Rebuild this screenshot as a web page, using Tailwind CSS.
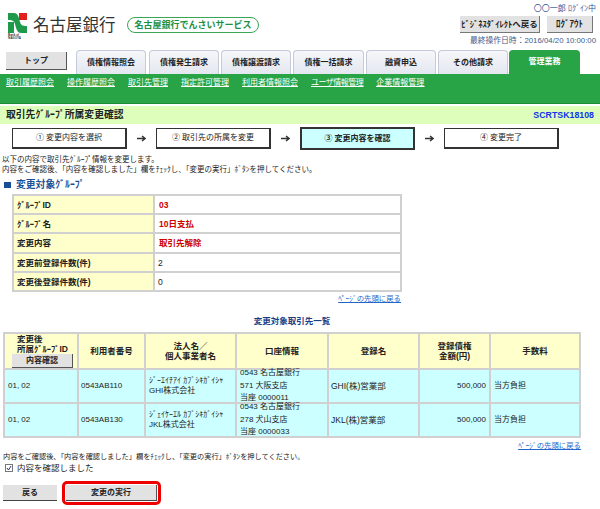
<!DOCTYPE html>
<html lang="ja">
<head>
    <meta charset="UTF-8">
    <title>取引先グループ所属変更確認</title>
    <script src="https://cdn.jsdelivr.net/npm/@tailwindcss/browser@4"></script>
</head>
<body class="bg-white w-[600px] h-[509px] overflow-hidden text-[8px] leading-[10px] text-[#222] font-['Liberation_Sans','Noto_Sans_CJK_JP',sans-serif]">

    <!-- header -->
    <header class="h-[50px] flex justify-between">
        <div class="flex items-start pt-[13px] pl-[8px]">
            <div class="w-[19px]">
                <svg width="19" height="20" viewBox="0 0 19 20">
                    <path d="M0 0H6C10 0 11 5 12 9C13 12 14 13 19 13V20H13C9 20 8 15 7 11C6 8 5 7 0 7Z" fill="#1f9a4a"/>
                    <rect x="0" y="9" width="6" height="11" fill="#1f9a4a"/>
                    <rect x="11" y="0" width="8" height="7" fill="#e0201c"/>
                </svg>
                <div class="text-[3px] leading-[3px] font-bold text-[#333] whitespace-nowrap mt-[1px]">Bank of<br>NAGOYA</div>
            </div>
            <div class="ml-[6px] mt-[2px] w-[83px] text-[16.5px] leading-[20px] text-[#333] whitespace-nowrap">名古屋銀行</div>
            <div class="ml-[11px] mt-[4px] w-[132px] h-[16px] border border-[#3aa655] rounded-full flex items-center justify-center text-[9px] font-bold text-[#1c8f42] whitespace-nowrap">名古屋銀行でんさいサービス</div>
        </div>
        <div class="flex flex-col items-end pt-[3px] pr-[4px]">
            <div class="text-[#33559a] h-[11px] leading-[11px]">〇〇一郎 ﾛｸﾞｲﾝ中</div>
            <div class="flex gap-[7px] mt-[2px] mr-[3px]">
                <button class="w-[80px] h-[17px] bg-[#e2e2e2] border-r border-b border-r-[#777] border-b-[#777] font-bold text-[8.5px] whitespace-nowrap">ﾋﾞｼﾞﾈｽﾀﾞｲﾚｸﾄへ戻る</button>
                <button class="w-[46px] h-[17px] bg-[#e2e2e2] border-r border-b border-r-[#777] border-b-[#777] font-bold text-[9px]">ﾛｸﾞｱｳﾄ</button>
            </div>
            <div class="text-[#445a8a] mt-[2px] h-[11px] leading-[11px] text-[7.8px]">最終操作日時：2016/04/20 10:00:00</div>
        </div>
    </header>

    <!-- tabs -->
    <nav class="h-[24px] flex items-end pl-[6px]">
        <button class="w-[61px] h-[18px] mb-[4px] mr-[9px] bg-[#e2e2e2] border-r border-b border-r-[#555] border-b-[#555] font-bold">トップ</button>
        <div class="w-[70px] h-[24px] mr-[3px] rounded-t-[4px] border border-b-0 border-[#c4cad8] bg-gradient-to-b from-[#f6f7fa] to-[#e4e7f0] flex items-center justify-center font-bold">債権情報照会</div>
        <div class="w-[70px] h-[24px] mr-[2px] rounded-t-[4px] border border-b-0 border-[#c4cad8] bg-gradient-to-b from-[#f6f7fa] to-[#e4e7f0] flex items-center justify-center font-bold">債権発生請求</div>
        <div class="w-[70px] h-[24px] mr-[2px] rounded-t-[4px] border border-b-0 border-[#c4cad8] bg-gradient-to-b from-[#f6f7fa] to-[#e4e7f0] flex items-center justify-center font-bold">債権譲渡請求</div>
        <div class="w-[71px] h-[24px] mr-[2px] rounded-t-[4px] border border-b-0 border-[#c4cad8] bg-gradient-to-b from-[#f6f7fa] to-[#e4e7f0] flex items-center justify-center font-bold">債権一括請求</div>
        <div class="w-[70px] h-[24px] mr-[2px] rounded-t-[4px] border border-b-0 border-[#c4cad8] bg-gradient-to-b from-[#f6f7fa] to-[#e4e7f0] flex items-center justify-center font-bold">融資申込</div>
        <div class="w-[70px] h-[24px] mr-[1px] rounded-t-[4px] border border-b-0 border-[#c4cad8] bg-gradient-to-b from-[#f6f7fa] to-[#e4e7f0] flex items-center justify-center font-bold">その他請求</div>
        <div class="w-[71px] h-[24px] rounded-t-[4px] bg-[#28a345] flex items-center justify-center font-bold text-white">管理業務</div>
    </nav>

    <!-- sub nav -->
    <div class="h-[30px] bg-[#28a345] border-b border-b-[#1d8a37] flex gap-[13px] pl-[6px] pt-[4px] text-white underline whitespace-nowrap">
        <a>取引履歴照会</a>
        <a>操作履歴照会</a>
        <a>取引先管理</a>
        <a>指定許可管理</a>
        <a>利用者情報照会</a>
        <a class="tracking-[-0.5px]">ユーザ情報管理</a>
        <a>企業情報管理</a>
    </div>

    <!-- page title -->
    <div class="mt-[2px] h-[18px] bg-[#ddffbb] flex items-center justify-between pl-[6px] pr-[6px]">
        <span class="font-bold text-[9.8px]">取引先ｸﾞﾙｰﾌﾟ所属変更確認</span>
        <span class="font-bold text-[8.8px] text-[#1133ee]">SCRTSK18108</span>
    </div>

    <!-- steps -->
    <div class="mt-[4px] ml-[12px] h-[21px] flex items-center">
        <div class="w-[115px] h-[21px] border border-[#333] border-r-2 border-b-2 flex items-center justify-center">① 変更内容を選択</div>
        <div class="w-[29px] flex justify-center"><svg width="9" height="7" viewBox="0 0 9 7"><path d="M0 3.5H7M5 1L8 3.5L5 6" fill="none" stroke="#333" stroke-width="1.5"/></svg></div>
        <div class="w-[115px] h-[21px] border border-[#333] border-r-2 border-b-2 flex items-center justify-center">② 取引先の所属を変更</div>
        <div class="w-[29px] flex justify-center"><svg width="9" height="7" viewBox="0 0 9 7"><path d="M0 3.5H7M5 1L8 3.5L5 6" fill="none" stroke="#333" stroke-width="1.5"/></svg></div>
        <div class="w-[115px] h-[23px] border-2 border-[#333] bg-[#ccffff] flex items-center justify-center font-bold">③ 変更内容を確認</div>
        <div class="w-[29px] flex justify-center"><svg width="9" height="7" viewBox="0 0 9 7"><path d="M0 3.5H7M5 1L8 3.5L5 6" fill="none" stroke="#333" stroke-width="1.5"/></svg></div>
        <div class="w-[115px] h-[21px] border border-[#333] border-r-2 border-b-2 flex items-center justify-center">④ 変更完了</div>
    </div>

    <!-- description -->
    <div class="mt-[6px] pl-[2px] text-[7.5px] text-[#222] whitespace-nowrap">
        <p>以下の内容で取引先ｸﾞﾙｰﾌﾟ情報を変更します。</p>
        <p>内容をご確認後、「内容を確認しました」欄をﾁｪｯｸし、「変更の実行」ﾎﾞﾀﾝを押してください。</p>
    </div>
    <h2 class="mt-[4px] ml-[4px] h-[12px] flex items-center gap-[5px] text-[#1a4f96] font-bold text-[9.8px]">
        <span class="w-[7px] h-[6px] bg-[#1a4f96]"></span>変更対象ｸﾞﾙｰﾌﾟ
    </h2>

    <!-- group table -->
    <table class="ml-[12px] mt-[3px] w-[390px] table-fixed border-collapse text-[8.5px]">
        <tbody>
            <tr class="h-[19px]"><th class="w-[141px] border-2 border-[#d0d0d0] bg-[#ffffcc] text-left font-bold pl-[3px]">ｸﾞﾙｰﾌﾟID</th><td class="border-2 border-[#d0d0d0] pl-[4px] text-[#cc0000] font-bold">03</td></tr>
            <tr class="h-[19px]"><th class="border-2 border-[#d0d0d0] bg-[#ffffcc] text-left font-bold pl-[3px]">ｸﾞﾙｰﾌﾟ名</th><td class="border-2 border-[#d0d0d0] pl-[4px] text-[#cc0000] font-bold">10日支払</td></tr>
            <tr class="h-[20px]"><th class="border-2 border-[#d0d0d0] bg-[#ffffcc] text-left font-bold pl-[3px]">変更内容</th><td class="border-2 border-[#d0d0d0] pl-[4px] text-[#cc0000] font-bold">取引先解除</td></tr>
            <tr class="h-[19px]"><th class="border-2 border-[#d0d0d0] bg-[#ffffcc] text-left font-bold pl-[3px]">変更前登録件数(件)</th><td class="border-2 border-[#d0d0d0] pl-[3px]">2</td></tr>
            <tr class="h-[19px]"><th class="border-2 border-[#d0d0d0] bg-[#ffffcc] text-left font-bold pl-[3px]">変更後登録件数(件)</th><td class="border-2 border-[#d0d0d0] pl-[3px]">0</td></tr>
        </tbody>
    </table>
    <div class="w-[401px] mt-[2px] text-[7.4px] text-right text-[#2266cc] underline">ﾍﾟｰｼﾞの先頭に戻る</div>

    <h2 class="w-[584px] mt-[12px] text-center text-[#1a3f86] font-bold text-[8.5px]">変更対象取引先一覧</h2>

    <!-- target table -->
    <table class="ml-[3px] mt-[6px] w-[578px] table-fixed border-collapse">
        <thead>
            <tr class="h-[36px] bg-[#ffffcc] text-[8.5px] leading-[10px]">
                <th class="w-[74px] border-2 border-[#d0d0d0] font-bold">
                    <div class="pl-[12px] text-left whitespace-nowrap">変更後<br>所属ｸﾞﾙｰﾌﾟID</div>
                    <button class="block w-[61px] h-[14px] ml-[7px] bg-[#e2e2e2] border-r border-b border-r-[#555] border-b-[#555] font-bold text-[8px]">内容確認</button>
                </th>
                <th class="w-[67px] border-2 border-[#d0d0d0] font-bold">利用者番号</th>
                <th class="w-[91px] border-2 border-[#d0d0d0] font-bold">法人名／<br>個人事業者名</th>
                <th class="w-[92px] border-2 border-[#d0d0d0] font-bold">口座情報</th>
                <th class="w-[91px] border-2 border-[#d0d0d0] font-bold">登録名</th>
                <th class="w-[71px] border-2 border-[#d0d0d0] font-bold">登録債権<br>金額(円)</th>
                <th class="border-2 border-[#d0d0d0] font-bold">手数料</th>
            </tr>
        </thead>
        <tbody class="bg-[#ccffff]">
            <tr class="h-[34px]">
                <td class="border-2 border-[#d0d0d0] pl-[3px]">01, 02</td>
                <td class="border-2 border-[#d0d0d0] pl-[2px]">0543AB110</td>
                <td class="border-2 border-[#d0d0d0] pl-[3px] whitespace-nowrap">ｼﾞｰｴｲﾁｱｲ ｶﾌﾞｼｷｶﾞｲｼｬ<br>GHI株式会社</td>
                <td class="border-2 border-[#d0d0d0] pl-[3px] whitespace-nowrap"><div class="h-[30px] flex flex-col justify-center leading-[12.5px]"><span>0543 名古屋銀行</span><span>571 大阪支店</span><span>当座 0000011</span></div></td>
                <td class="border-2 border-[#d0d0d0] pl-[2px] text-[8.5px]">GHI(株)営業部</td>
                <td class="border-2 border-[#d0d0d0] pr-[3px] text-right">500,000</td>
                <td class="border-2 border-[#d0d0d0] pl-[3px]">当方負担</td>
            </tr>
            <tr class="h-[34px]">
                <td class="border-2 border-[#d0d0d0] pl-[3px]">01, 02</td>
                <td class="border-2 border-[#d0d0d0] pl-[2px]">0543AB130</td>
                <td class="border-2 border-[#d0d0d0] pl-[3px] whitespace-nowrap">ｼﾞｪｲｹｰｴﾙ ｶﾌﾞｼｷｶﾞｲｼｬ<br>JKL株式会社</td>
                <td class="border-2 border-[#d0d0d0] pl-[3px] whitespace-nowrap"><div class="h-[30px] flex flex-col justify-center leading-[12.5px]"><span>0543 名古屋銀行</span><span>278 犬山支店</span><span>当座 0000033</span></div></td>
                <td class="border-2 border-[#d0d0d0] pl-[2px] text-[8.5px]">JKL(株)営業部</td>
                <td class="border-2 border-[#d0d0d0] pr-[3px] text-right">500,000</td>
                <td class="border-2 border-[#d0d0d0] pl-[3px]">当方負担</td>
            </tr>
        </tbody>
    </table>
    <div class="w-[581px] mt-[3px] text-[7.4px] text-right text-[#2266cc] underline">ﾍﾟｰｼﾞの先頭に戻る</div>

    <!-- confirm -->
    <p class="mt-[1px] pl-[3px] text-[7.2px] whitespace-nowrap">内容をご確認後、「内容を確認しました」欄をﾁｪｯｸし、「変更の実行」ﾎﾞﾀﾝを押してください。</p>
    <label class="ml-[5px] flex items-center gap-[4px] h-[11px] text-[8.5px]">
        <span class="w-[8px] h-[8px] border border-[#777] bg-white flex items-center justify-center">
            <svg width="6" height="6" viewBox="0 0 6 6"><path d="M1 3L2.5 5L5 1" fill="none" stroke="#223388" stroke-width="1"/></svg>
        </span>
        内容を確認しました
    </label>

    <!-- actions -->
    <div class="mt-[8px] ml-[3px] flex items-center h-[24px]">
        <button class="w-[54px] h-[16px] bg-[#e2e2e2] border-b border-b-[#444] font-bold">戻る</button>
        <div class="ml-[5px] w-[99px] h-[24px] border-[3px] border-[#ee0000] rounded-[5px] flex items-center justify-center">
            <button class="w-[91px] h-[16px] bg-[#e2e2e2] border-r border-b border-r-[#555] border-b-[#444] font-bold">変更の実行</button>
        </div>
    </div>
</body>
</html>
